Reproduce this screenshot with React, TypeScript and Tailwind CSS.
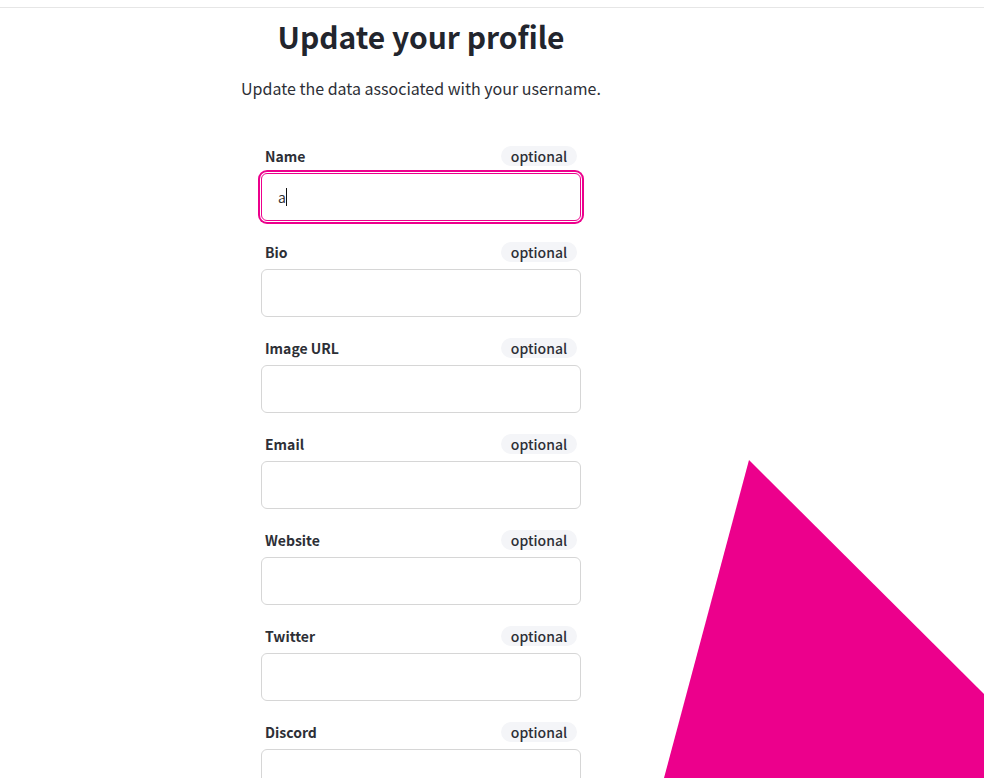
import React from 'react'

const font = { fontFamily: '"Noto Sans CJK KR", "Noto Sans", sans-serif' }

const fields = ['Name', 'Bio', 'Image URL', 'Email', 'Website', 'Twitter', 'Discord']

function Field({ label, focused }: { label: string; focused?: boolean }) {
  return (
    <div className="flex flex-col pb-[21px]">
      <div className="flex h-5 items-center justify-between px-1">
        <span className="text-[14px] font-semibold text-[#2d2f36]">{label}</span>
        <span className="flex h-5 w-[76px] items-center justify-center rounded-full bg-[#f4f5f8] text-[14px] font-medium text-[#2d2f36]">
          optional
        </span>
      </div>
      {focused ? (
        <div className="mt-[7px] flex h-12 items-center rounded-md border border-[#ec008c] bg-white px-4 ring-2 ring-[#ec008c] ring-offset-1 ring-offset-white">
          <span className="text-[14px] text-[#333]">a</span>
          <span className="h-[18px] w-px bg-[#111]" />
        </div>
      ) : (
        <input
          type="text"
          className="mt-[7px] h-12 w-full rounded-md border border-[#d6d6d6] bg-white px-4 text-[14px] outline-none"
        />
      )}
    </div>
  )
}

export default function App() {
  return (
    <div className="relative h-[778px] w-[984px] overflow-hidden bg-white" style={font}>
      <div className="h-2 border-b border-[#e6e6e6]" />
      <svg className="absolute left-0 top-0 h-[778px] w-[984px]" viewBox="0 0 984 778">
        <polygon points="749,460 984,694 984,778 664,778" fill="#ec008c" />
      </svg>
      <div className="relative ml-[241px] w-[360px] pt-[8px]">
        <h1 className="text-center text-[30px] font-bold leading-[40px] text-[#22252d]">Update your profile</h1>
        <p className="mt-[20px] whitespace-nowrap text-center text-[16px] leading-6 text-[#2d2f36]">
          Update the data associated with your username.
        </p>
        <div className="mx-5 mt-[46px] flex flex-col">
          {fields.map((f, i) => (
            <Field key={f} label={f} focused={i === 0} />
          ))}
        </div>
      </div>
    </div>
  )
}
